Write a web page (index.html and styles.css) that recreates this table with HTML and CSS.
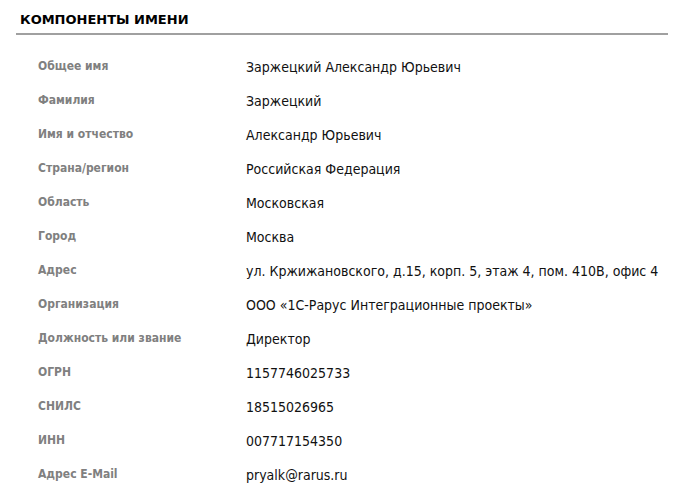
FILE: index.html
```html
<!DOCTYPE html>
<html>
<head>
    <title>Компоненты имени</title>
    <link rel="stylesheet" href="styles.css">
</head>

<body>
    <div class="section">
        <h2 class="section-title">Компоненты имени</h2>
        <table class="props">
            <tr><th>Общее имя</th><td>Заржецкий Александр Юрьевич</td></tr>
            <tr><th>Фамилия</th><td>Заржецкий</td></tr>
            <tr><th>Имя и отчество</th><td>Александр Юрьевич</td></tr>
            <tr><th>Страна/регион</th><td>Российская Федерация</td></tr>
            <tr><th>Область</th><td>Московская</td></tr>
            <tr><th>Город</th><td>Москва</td></tr>
            <tr><th>Адрес</th><td>ул. Кржижановского, д.15, корп. 5, этаж 4, пом. 410В, офис 4</td></tr>
            <tr><th>Организация</th><td>ООО «1С-Рарус Интеграционные проекты»</td></tr>
            <tr><th>Должность или звание</th><td>Директор</td></tr>
            <tr><th>ОГРН</th><td>1157746025733</td></tr>
            <tr><th>СНИЛС</th><td>18515026965</td></tr>
            <tr><th>ИНН</th><td>007717154350</td></tr>
            <tr><th>Адрес E-Mail</th><td>pryalk@rarus.ru</td></tr>
        </table>
    </div>
</body>
</html>
```

FILE: styles.css
```css
body {
    font-family: "DejaVu Sans Condensed", "DejaVu Sans", sans-serif;
    margin: 0;
    background-color: #fff;
    color: #111;
}

.section {
    padding: 12px 6px 0 16px;
}

.section-title {
    font-family: "DejaVu Sans", sans-serif;
    font-size: 13px;
    font-weight: bold;
    text-transform: uppercase;
    margin: 0;
    padding: 0 0 5px 4px;
    line-height: 16px;
    border-bottom: 2px solid #a0a0a0;
    color: #000;
}

/* Table Styles */
.props {
    border-collapse: collapse;
    margin-top: 22px;
}

.props th, .props td {
    padding: 0;
    vertical-align: top;
    text-align: left;
}

.props th {
    width: 208px;
    height: 34px;
    padding-left: 22px;
    font-size: 12px;
    font-weight: bold;
    color: #808080;
    line-height: 18px;
}

.props td {
    height: 33px;
    padding-top: 1px;
    font-size: 14px;
    line-height: 18px;
}
```
